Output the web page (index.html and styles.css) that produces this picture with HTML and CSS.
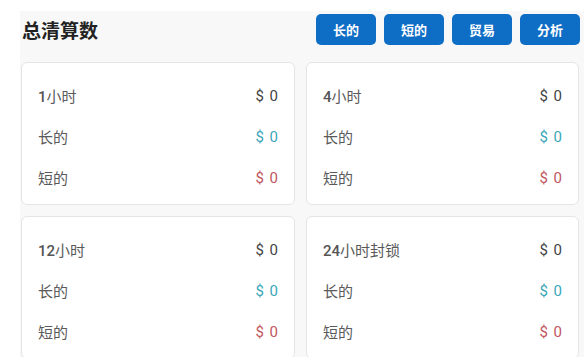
FILE: index.html
```html
<!DOCTYPE html>
<html lang="zh">
<head>
    <meta charset="UTF-8">
    <meta name="viewport" content="width=device-width, initial-scale=1.0">
    <title>总清算数</title>
    <link rel="stylesheet" href="styles.css">
</head>
<body>
    <div class="panel">
        <!-- Header -->
        <div class="panel-header">
            <h2 class="title">总清算数</h2>
            <div class="tabs">
                <button class="tab-btn">长的</button>
                <button class="tab-btn">短的</button>
                <button class="tab-btn">贸易</button>
                <button class="tab-btn">分析</button>
            </div>
        </div>

        <!-- Cards -->
        <div class="cards">
            <div class="card">
                <div class="row"><span class="label"><b>1</b>小时</span><span class="value">$ 0</span></div>
                <div class="row"><span class="label">长的</span><span class="value long">$ 0</span></div>
                <div class="row"><span class="label">短的</span><span class="value short">$ 0</span></div>
            </div>
            <div class="card">
                <div class="row"><span class="label"><b>4</b>小时</span><span class="value">$ 0</span></div>
                <div class="row"><span class="label">长的</span><span class="value long">$ 0</span></div>
                <div class="row"><span class="label">短的</span><span class="value short">$ 0</span></div>
            </div>
            <div class="card">
                <div class="row"><span class="label"><b>12</b>小时</span><span class="value">$ 0</span></div>
                <div class="row"><span class="label">长的</span><span class="value long">$ 0</span></div>
                <div class="row"><span class="label">短的</span><span class="value short">$ 0</span></div>
            </div>
            <div class="card">
                <div class="row"><span class="label"><b>24</b>小时封锁</span><span class="value">$ 0</span></div>
                <div class="row"><span class="label">长的</span><span class="value long">$ 0</span></div>
                <div class="row"><span class="label">短的</span><span class="value short">$ 0</span></div>
            </div>
        </div>
    </div>
</body>
</html>
```

FILE: styles.css
```css
* {
    margin: 0;
    padding: 0;
    box-sizing: border-box;
}

body {
    font-family: Roboto, "Noto Sans CJK SC", sans-serif;
    background-color: #fff;
    overflow: hidden;
}

/* Outer panel */
.panel {
    margin: 11px 0 0 20px;
    width: calc(100% - 20px);
    padding: 3px 0 0 1px;
    background-color: #f8f8f8;
}

.panel-header {
    display: flex;
    justify-content: space-between;
    align-items: center;
    width: 559px;
    height: 31px;
}

.title {
    font-family: "Noto Sans CJK SC", sans-serif;
    font-size: 19px;
    font-weight: bold;
    color: #222;
    padding-left: 1px;
}

.tabs {
    display: flex;
    gap: 8px;
}

.tab-btn {
    font-family: "Noto Sans CJK SC", sans-serif;
    font-size: 13px;
    font-weight: bold;
    color: #fff;
    background-color: #0e6dc5;
    border: none;
    border-radius: 5px;
    width: 60px;
    height: 31px;
}

/* Cards grid */
.cards {
    display: grid;
    grid-template-columns: 274px 273px;
    gap: 11px;
    margin-top: 17px;
}

.card {
    background: #fff;
    border: 1px solid #e5e5e5;
    border-radius: 6px;
    padding: 12px 16px 6px 16px;
}

.row {
    display: flex;
    justify-content: space-between;
    align-items: center;
    height: 41px;
    font-size: 15px;
}

.label {
    color: #5a5a5a;
}

.label b {
    font-weight: 500;
    color: #555;
}

.value {
    color: #444;
    word-spacing: 2px;
}

.value.long {
    color: #3aa7b9;
}

.value.short {
    color: #bf5660;
}
```
